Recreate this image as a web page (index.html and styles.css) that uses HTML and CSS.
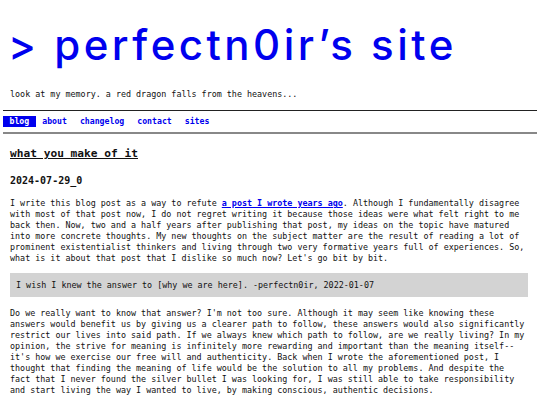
FILE: index.html
```html
<!DOCTYPE html>
<html>
<head>
<meta charset="utf-8">
<link rel="stylesheet" href="styles.css">
</head>
<body>
<header class="site-header">
  <h1 class="site-title">&gt; perfectn0ir’s site</h1>
  <p class="tagline">look at my memory. a red dragon falls from the heavens...</p>
</header>
<nav class="nav">
  <a class="nav-link active" href="#">blog</a>
  <a class="nav-link" href="#">about</a>
  <a class="nav-link" href="#">changelog</a>
  <a class="nav-link" href="#">contact</a>
  <a class="nav-link" href="#">sites</a>
</nav>
<main class="post">
  <h2 class="post-title">what you make of it</h2>
  <h3 class="post-date">2024-07-29_0</h3>
  <p class="para">I write this blog post as a way to refute <a class="inline-link" href="#">a post I wrote years ago</a>. Although I fundamentally disagree with most of that post now, I do not regret writing it because those ideas were what felt right to me back then. Now, two and a half years after publishing that post, my ideas on the topic have matured into more concrete thoughts. My new thoughts on the subject matter are the result of reading a lot of prominent existentialist thinkers and living through two very formative years full of experiences. So, what is it about that post that I dislike so much now? Let's go bit by bit.</p>
  <blockquote class="quote">I wish I knew the answer to [why we are here]. -perfectn0ir, 2022-01-07</blockquote>
  <p class="para after-quote">Do we really want to know that answer? I'm not too sure. Although it may seem like knowing these answers would benefit us by giving us a clearer path to follow, these answers would also significantly restrict our lives into said path. If we always knew which path to follow, are we really living? In my opinion, the strive for meaning is infinitely more rewarding and important than the meaning itself-- it's how we exercise our free will and authenticity. Back when I wrote the aforementioned post, I thought that finding the meaning of life would be the solution to all my problems. And despite the fact that I never found the silver bullet I was looking for, I was still able to take responsibility and start living the way I wanted to live, by making conscious, authentic decisions.</p>
</main>
</body>
</html>
```

FILE: styles.css
```css
html, body {
  margin: 0;
  padding: 0;
  background: #fff;
}
body {
  font-family: "DejaVu Sans Mono", monospace;
  font-size: 8.4px;
  line-height: 11px;
  color: #111;
  padding: 0 3px;
}
.site-header {
  padding: 0 5px;
}
.site-title {
  margin: 0;
  padding-top: 21px;
  font-family: "Inter", "DejaVu Sans", sans-serif;
  font-weight: 500;
  font-size: 42px;
  line-height: 48px;
  letter-spacing: 3.5px;
  color: #0000ee;
}
.tagline {
  margin: 20px 0 10px 2px;
}
.nav {
  display: flex;
  border-top: 1.5px solid #222;
  border-bottom: 2px solid #888;
  padding: 5px 0 5px;
  font-weight: bold;
  font-size: 8.2px;
}
.nav-link {
  color: #0000ee;
  text-decoration: none;
  padding: 0 6.5px;
}
.nav-link.active {
  background: #0000ee;
  color: #fff;
}
.post {
  padding: 0 9px 0 7px;
}
.post-title {
  margin: 12px 0 0;
  font-size: 11.2px;
  line-height: 16px;
  text-decoration: underline;
  font-weight: bold;
}
.post-date {
  margin: 12px 0 0;
  font-size: 10px;
  line-height: 14px;
  font-weight: bold;
}
.para {
  margin: 10px 0 9px;
}
.para.after-quote {
  margin-top: 11px;
}
.inline-link {
  color: #0000ee;
  font-weight: bold;
}
.quote {
  margin: 0;
  background: #d3d3d3;
  padding: 6.5px 6px;
}
```
